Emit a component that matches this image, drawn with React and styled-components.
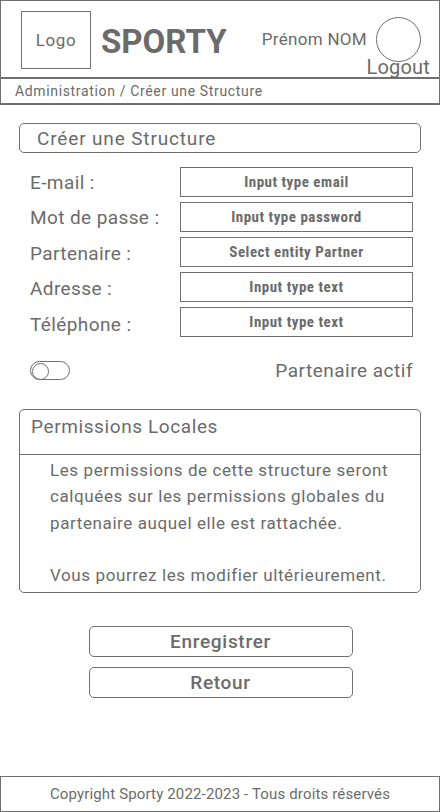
import React from "react";
import styled, { createGlobalStyle } from "styled-components";

const Global = createGlobalStyle`
  html, body {
    margin: 0;
    padding: 0;
    background: #fff;
  }
  body {
    font-family: Roboto, "DejaVu Sans", sans-serif;
    color: #6b6b6b;
  }
  * { box-sizing: border-box; }
`;

const Page = styled.div`
  width: 440px;
  height: 812px;
  display: flex;
  flex-direction: column;
`;

const Header = styled.header`
  height: 79px;
  border: 1px solid #707070;
  border-bottom-width: 2px;
  display: flex;
  align-items: center;
  padding: 0 0 0 20px;
  position: relative;
`;

const LogoBox = styled.div`
  width: 70px;
  height: 58px;
  border: 1px solid #707070;
  display: flex;
  align-items: center;
  justify-content: center;
  font-size: 17px;
  letter-spacing: 0.6px;
  margin-top: 1px;
`;

const Brand = styled.div`
  font-size: 33px;
  font-weight: 700;
  margin-left: 10px;
  margin-top: 4px;
`;

const User = styled.div`
  margin-left: auto;
  margin-right: 18px;
  display: flex;
  align-items: center;
  gap: 9px;
  font-size: 17px;
  letter-spacing: 0.3px;
`;

const Avatar = styled.div`
  width: 45px;
  height: 45px;
  border-radius: 50%;
  border: 1px solid #707070;
`;

const Logout = styled.div`
  position: absolute;
  right: 9px;
  bottom: 0;
  font-size: 20px;
  line-height: 20px;
  letter-spacing: 0.2px;
`;

const Breadcrumb = styled.div`
  height: 26px;
  border: 1px solid #707070;
  border-top: none;
  border-bottom-width: 2px;
  padding-left: 14px;
  font-size: 14px;
  letter-spacing: 0.65px;
  display: flex;
  align-items: center;
`;

const Main = styled.main`
  flex: 1;
  padding: 18px 19px 0 19px;
  display: flex;
  flex-direction: column;
`;

const TitleBox = styled.div`
  height: 30px;
  border: 1px solid #707070;
  border-radius: 5px;
  padding-left: 17px;
  font-size: 19px;
  letter-spacing: 0.85px;
  display: flex;
  align-items: center;
`;

const Form = styled.div`
  margin-top: 14px;
  display: flex;
  flex-direction: column;
  gap: 5px;
  padding: 0 8px 0 11px;
`;

const Row = styled.div`
  display: flex;
  align-items: center;
  height: 30px;
`;

const Label = styled.div`
  width: 150px;
  font-size: 19px;
  letter-spacing: 0.4px;
  padding-top: ${(p) => p.shift || 0}px;
`;

const Field = styled.div`
  flex: 1;
  height: 30px;
  border: 1px solid #707070;
  display: flex;
  align-items: center;
  justify-content: center;
  font-family: "Liberation Sans Narrow", "Roboto Condensed", "Liberation Sans", sans-serif;
  font-weight: 700;
  font-size: 15px;
  letter-spacing: 0.5px;
`;

const ActiveRow = styled.div`
  margin-top: 22px;
  padding: 0 8px 0 11px;
  display: flex;
  align-items: center;
  justify-content: space-between;
  font-size: 19px;
  letter-spacing: 0.5px;
`;

const Toggle = styled.div`
  width: 40px;
  height: 19px;
  border: 1px solid #707070;
  border-radius: 10px;
  position: relative;
  &::after {
    content: "";
    position: absolute;
    left: 1px;
    top: 1px;
    width: 15px;
    height: 15px;
    border-radius: 50%;
    border: 1px solid #707070;
  }
`;

const Panel = styled.section`
  margin-top: 27px;
  height: 184px;
  border: 1px solid #707070;
  border-radius: 5px;
  display: flex;
  flex-direction: column;
`;

const PanelHead = styled.div`
  height: 45px;
  border-bottom: 1px solid #707070;
  padding: 5px 0 0 11px;
  font-size: 19px;
  letter-spacing: 0.6px;
`;

const PanelBody = styled.div`
  padding: 2px 0 0 30px;
  font-size: 17px;
  letter-spacing: 0.6px;
  line-height: 26.3px;
  p {
    margin: 0;
  }
`;

const Actions = styled.div`
  margin-top: 33px;
  display: flex;
  flex-direction: column;
  align-items: center;
  gap: 10px;
`;

const Button = styled.button`
  width: 264px;
  height: 31px;
  border: 1px solid #707070;
  border-radius: 5px;
  background: #fff;
  color: #6b6b6b;
  font-family: Roboto, "DejaVu Sans", sans-serif;
  font-size: 19px;
  font-weight: 500;
  letter-spacing: 0.7px;
  padding: 0;
  margin-left: 1px;
`;

const Footer = styled.footer`
  height: 36px;
  border: 1px solid #707070;
  display: flex;
  align-items: center;
  justify-content: center;
  font-size: 15px;
  letter-spacing: 0.15px;
`;

const fields = [
  ["E-mail :", "Input type email", 0],
  ["Mot de passe :", "Input type password", 1],
  ["Partenaire :", "Select entity Partner", 2],
  ["Adresse :", "Input type text", 3],
  ["Téléphone :", "Input type text", 4],
];

export default function App() {
  return (
    <Page>
      <Global />
      <Header>
        <LogoBox>Logo</LogoBox>
        <Brand>SPORTY</Brand>
        <User>
          <span>Prénom NOM</span>
          <Avatar />
        </User>
        <Logout>Logout</Logout>
      </Header>
      <Breadcrumb>Administration / Créer une Structure</Breadcrumb>
      <Main>
        <TitleBox>Créer une Structure</TitleBox>
        <Form>
          {fields.map(([label, ph, shift]) => (
            <Row key={label + ph}>
              <Label shift={shift}>{label}</Label>
              <Field>{ph}</Field>
            </Row>
          ))}
        </Form>
        <ActiveRow>
          <Toggle />
          <span>Partenaire actif</span>
        </ActiveRow>
        <Panel>
          <PanelHead>Permissions Locales</PanelHead>
          <PanelBody>
            <p>Les permissions de cette structure seront</p>
            <p>calquées sur les permissions globales du</p>
            <p>partenaire auquel elle est rattachée.</p>
            <p>&nbsp;</p>
            <p>Vous pourrez les modifier ultérieurement.</p>
          </PanelBody>
        </Panel>
        <Actions>
          <Button>Enregistrer</Button>
          <Button>Retour</Button>
        </Actions>
      </Main>
      <Footer>Copyright Sporty 2022-2023 - Tous droits réservés</Footer>
    </Page>
  );
}
